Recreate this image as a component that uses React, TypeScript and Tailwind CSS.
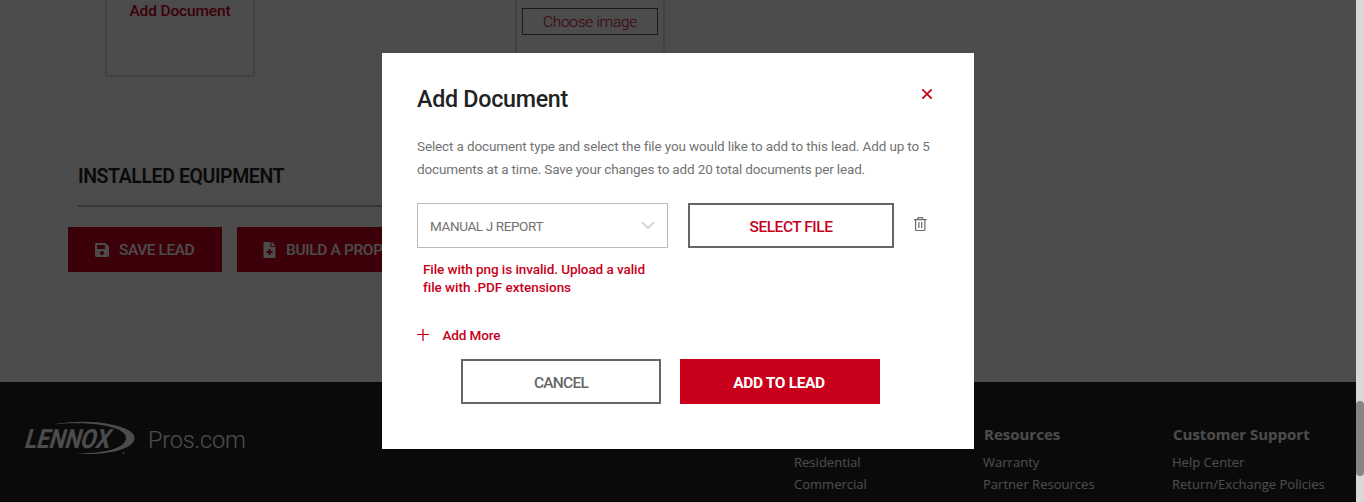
import type { ReactNode } from "react";
import { FaFileMedical, FaSave } from "react-icons/fa";

function LennoxLogo() {
  return (
    <svg className="overflow-visible" width="112" height="36" viewBox="0 0 112 36" fill="#fff">
      <path d="M28 4.6C48 0.6 72 1 90 5.2C103 8.4 110 13 109.500 18.500C109 27 92 33 68 34C62 34.200 57 33.900 52 33.100C60 33.200 66 33 71 32.500C90 30.500 101 25 101 18C101 12 92 7.500 78 5.200C62 2.800 44 2.900 28 4.600Z" />
      <g transform="translate(-1.500 27.800) skewX(-16)">
        <text
          x="0"
          y="0"
          textLength="85"
          lengthAdjust="spacingAndGlyphs"
          fontFamily="Roboto, sans-serif"
          fontWeight="700"
          fontSize="26.500"
        >
          LENNOX
        </text>
      </g>
      <circle cx="98.600" cy="32.800" r="0.900" />
    </svg>
  );
}

function FooterColumn({ title, links, className }: { title: string; links: string[]; className: string }) {
  return (
    <div className={className}>
      <h4 className="h-[28px] pl-px text-[15px] leading-[22px] font-bold">{title}</h4>
      {links.map((link) => (
        <a key={link} className="block h-[22px] text-[13px] leading-[22px] tracking-[0.02px] whitespace-nowrap">
          {link}
        </a>
      ))}
    </div>
  );
}

function PrimaryAction({ icon, children, className }: { icon: ReactNode; children: ReactNode; className: string }) {
  return (
    <button
      className={`flex h-[45px] items-center bg-[#c8001b] text-[15.5px] font-medium whitespace-nowrap text-white ${className}`}
    >
      {icon}
      <span className="pt-[3px]">{children}</span>
    </button>
  );
}

function Page() {
  return (
    <div className="flex h-full flex-col bg-white">
      <main className="h-[382px]">
        <div className="flex h-[77px] pl-[105px]">
          <div className="flex w-[150px] justify-center border-x-2 border-b-2 border-[#dcdcdc]">
            <span className="h-[22px] text-[15.5px] leading-[22px] font-medium tracking-[-0.15px] text-[#c8001b]">
              Add Document
            </span>
          </div>
          <div className="ml-[260px] w-[150px] border-x-2 border-b-2 border-[#dcdcdc] px-[5px] pt-[8px]">
            <button className="h-[27px] w-full border border-[#5c5c5c] text-[15.5px] leading-[26px] font-light tracking-[-0.3px] text-[#c8001b]">
              Choose image
            </button>
          </div>
        </div>
        <h3 className="mt-[87px] ml-[78px] h-[43px] w-[800px] border-b-2 border-[#bababa] text-[19.5px] leading-[25px] font-semibold tracking-[-0.41px] text-[#222]">
          INSTALLED EQUIPMENT
        </h3>
        <div className="flex gap-[15px] pt-[20px] pl-[68px]">
          <PrimaryAction
            className="w-[154px] pl-[27px] tracking-[-0.44px]"
            icon={<FaSave className="mr-[10px] h-4 w-[14px]" />}
          >
            SAVE LEAD
          </PrimaryAction>
          <PrimaryAction
            className="w-[210px] pl-[26px] tracking-[-0.36px]"
            icon={<FaFileMedical className="mr-[10px] h-4 w-[13px]" />}
          >
            BUILD A PROPOSAL
          </PrimaryAction>
        </div>
      </main>
      <footer className="flex h-[120px] overflow-hidden border-b border-black bg-[#222] pl-[25px] font-['Open_Sans'] text-white">
        <div className="flex w-[769px] gap-[11px] pt-[38px]">
          <LennoxLogo />
          <span className="pt-[4px] font-[Roboto] text-[23.5px] leading-[32px] font-light tracking-[-0.18px]">
            Pros.com
          </span>
        </div>
        <FooterColumn className="w-[189px] pt-[41px]" title="Products" links={["Residential", "Commercial"]} />
        <FooterColumn className="w-[189px] pt-[41px]" title="Resources" links={["Warranty", "Partner Resources"]} />
        <FooterColumn
          className="w-[184px] pt-[41px]"
          title="Customer Support"
          links={["Help Center", "Return/Exchange Policies"]}
        />
      </footer>
    </div>
  );
}

function AddDocumentDialog() {
  return (
    <section role="dialog" className="h-[396px] w-[592px] bg-white px-[35px]">
      <header className="flex justify-between pt-[30px]">
        <h2 className="h-[52px] text-[23.25px] leading-[33px] font-medium tracking-[-0.27px] text-[#222]">
          Add Document
        </h2>
        <button aria-label="Close" className="mt-[5px] mr-[6px] h-[11px] w-[11px]">
          <svg width="11" height="11" viewBox="0 0 11 11" fill="none" stroke="#c8001b" strokeWidth="1.8">
            <path d="M0.300 1.300L9.700 10.700M9.700 1.300L0.300 10.700" />
          </svg>
        </button>
      </header>
      <p className="text-[13.5px] leading-[23px] whitespace-nowrap text-[#737373]">
        <span className="block tracking-[-0.13px]">
          Select a document type and select the file you would like to add to this lead. Add up to 5
        </span>
        <span className="block tracking-[-0.15px]">
          documents at a time. Save your changes to add 20 total documents per lead.
        </span>
      </p>
      <div className="mt-[22px] flex">
        <div className="flex h-[45px] w-[251px] items-center justify-between border border-[#bcbab3] pr-[12px] pl-[12px]">
          <span className="pt-px text-[13.5px] tracking-[-0.38px] text-[#737373]">MANUAL J REPORT</span>
          <svg width="14" height="9" viewBox="0 0 14 9" fill="none" stroke="#d3cfc8" strokeWidth="1.7">
            <path d="M0.800 1L7 7.200L13.200 1" />
          </svg>
        </div>
        <button className="ml-[20px] h-[45px] w-[206px] border-2 border-[#666] pt-[4px] text-[15.5px] font-medium tracking-[-0.48px] text-[#c8001b]">
          SELECT FILE
        </button>
        <button aria-label="Delete" className="mt-[14px] ml-[20px] h-[15px] w-[13px]">
          <svg width="13" height="15" viewBox="0 0 13 15" fill="none" stroke="#6a6a6a" strokeWidth="1.200">
            <path d="M0 2.600H12.500M3.700 2.500V1.300Q3.700 0.600 4.500 0.600H7.900Q8.700 0.600 8.700 1.300V2.500M1.600 2.600V12.500Q1.600 13.500 2.600 13.500H9.900Q10.900 13.500 10.900 12.500V2.600M4.900 5V10.900M7.700 5V10.900" />
          </svg>
        </button>
      </div>
      <p className="mt-[12px] ml-[6px] text-[13.5px] leading-[18px] font-medium whitespace-nowrap text-[#c8001b]">
        <span className="block tracking-[-0.07px]">File with png is invalid. Upload a valid</span>
        <span className="block tracking-[-0.03px]">file with .PDF extensions</span>
      </p>
      <button className="mt-[28px] flex h-[22px] items-center text-[13.5px] font-medium tracking-[-0.12px] text-[#c8001b]">
        <svg className="mr-[13.5px]" width="12" height="12" viewBox="0 0 12 12" fill="none" stroke="#c8001b">
          <path d="M6 0V12" strokeWidth="1.300" />
          <path d="M0 5.500H12" strokeWidth="1.100" />
        </svg>
        <span className="pt-px">Add More</span>
      </button>
      <div className="mt-[13px] ml-[44px] flex gap-[19px]">
        <button className="h-[45px] w-[200px] border-2 border-[#666] pt-[4px] text-[15.5px] font-medium tracking-[-0.75px] text-[#666]">
          CANCEL
        </button>
        <button className="h-[45px] w-[200px] bg-[#c8001b] pt-[4px] pr-[2px] text-[15.5px] font-bold tracking-[-0.35px] text-white">
          ADD TO LEAD
        </button>
      </div>
    </section>
  );
}

export default function App() {
  return (
    <div className="flex h-[502px] w-full overflow-hidden font-[Roboto]">
      <div className="relative min-w-0 flex-1">
        <Page />
        <div className="absolute inset-0 flex items-center justify-center bg-black/70">
          <AddDocumentDialog />
        </div>
      </div>
      <div className="w-2 bg-[#d9d9d9] pt-[401px]">
        <div className="h-[75px] w-2 rounded-full bg-[#858585]" />
      </div>
    </div>
  );
}
